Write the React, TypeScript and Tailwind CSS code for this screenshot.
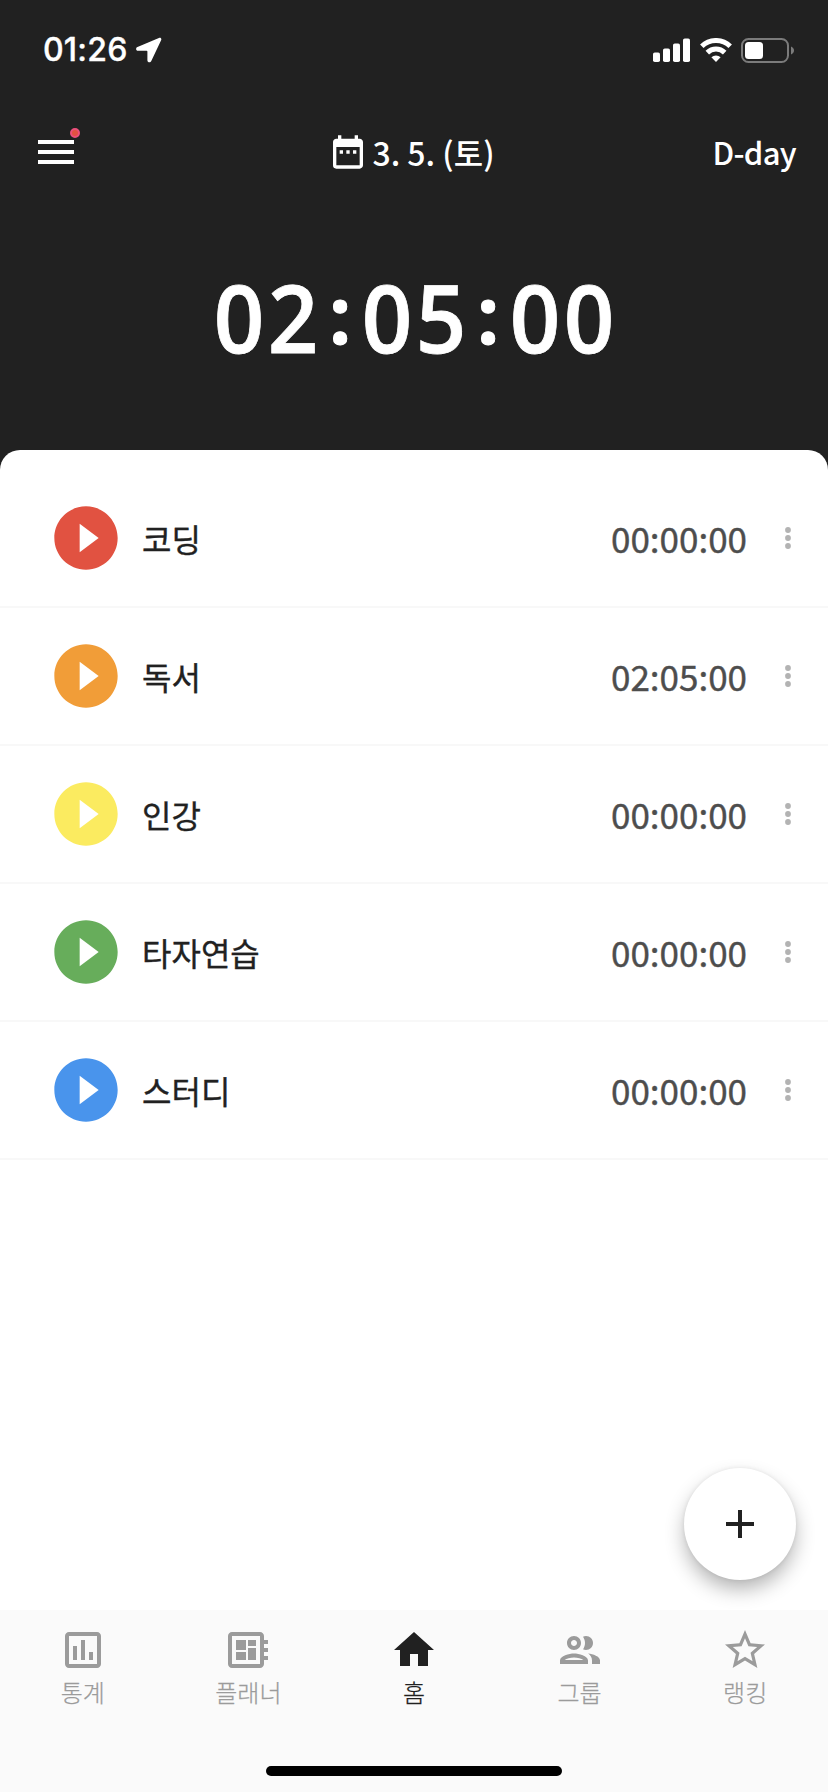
import React from 'react';
import {
  MdAdd,
  MdDateRange,
  MdHome,
  MdMenu,
  MdOutlineAssessment,
  MdOutlineDeveloperBoard,
  MdOutlineGroup,
  MdPlayCircleFilled,
  MdStarOutline,
} from 'react-icons/md';

const subjects = [
  { name: '코딩', time: '00:00:00', color: 'text-[#e15241]' },
  { name: '독서', time: '02:05:00', color: 'text-[#f19d38]' },
  { name: '인강', time: '00:00:00', color: 'text-[#fbeb60]' },
  { name: '타자연습', time: '00:00:00', color: 'text-[#67ad5b]' },
  { name: '스터디', time: '00:00:00', color: 'text-[#4994ec]' },
];

const tabs = [
  { label: '통계', icon: MdOutlineAssessment },
  { label: '플래너', icon: MdOutlineDeveloperBoard },
  { label: '홈', icon: MdHome, active: true },
  { label: '그룹', icon: MdOutlineGroup },
  { label: '랭킹', icon: MdStarOutline },
];

const StatusBar = () => (
  <div className="flex h-[100px] items-center justify-between pl-[43px] pr-[34px]">
    <div className="flex items-center gap-2">
      <span className="w-[85px] whitespace-nowrap font-['Inter',sans-serif] text-[32px] font-medium leading-none tracking-[0.2px] [-webkit-text-stroke:0.35px]">01:26</span>
      <svg width="26" height="26" viewBox="0 0 26 26" fill="currentColor">
        <path d="M22.900.9 1.500 9.900C-.6 10.800-.2 13.800 2 13.800h8.600c.5 0 .8.3.8.8v8.600c0 2.500 3 2.900 3.900.9L25.100 3.200C25.900 1.400 24.600.1 22.900.9Z" />
      </svg>
    </div>
    <div className="flex items-center">
      <svg width="37" height="24" viewBox="0 0 37 24" fill="currentColor">
        <rect x="0" y="14.500" width="7" height="9.500" rx="1.800" />
        <rect x="10" y="10.500" width="7" height="13.500" rx="1.800" />
        <rect x="20" y="5.500" width="7" height="18.500" rx="1.800" />
        <rect x="30" y="0.500" width="7" height="23.500" rx="1.800" />
      </svg>
      <svg className="ml-2.5" width="32" height="24" viewBox="0 0 32 24" fill="none" stroke="currentColor">
        <path d="M1.800 8.200a20.500 20.500 0 0 1 28.400 0" strokeWidth="5" />
        <path d="M7.300 14.600a12.400 12.400 0 0 1 17.400 0" strokeWidth="5" />
        <path d="M16 24l-4.600-4.700a6.500 6.500 0 0 1 9.200 0Z" fill="currentColor" stroke="none" />
      </svg>
      <svg className="ml-[9px]" width="53" height="25" viewBox="0 0 53 25">
        <rect x="1" y="1" width="46" height="23" rx="6.500" fill="none" stroke="#7b7b7b" strokeWidth="2" />
        <rect x="4" y="4" width="18" height="17" rx="3.500" fill="#fff" />
        <path d="M50 8.500c4 1.500 4 6.500 0 8Z" fill="#7b7b7b" />
      </svg>
    </div>
  </div>
);

const Header = () => (
  <div className="grid h-[104px] grid-cols-3 items-center px-8 text-[32px] font-medium leading-[48px]">
    <div className="relative size-12">
      <MdMenu className="size-12" />
      <span className="absolute left-[38px] top-0 size-2.5 rounded-full border-2 border-[#eb4f7a] bg-[#e15241]" />
    </div>
    <div className="flex items-center justify-center gap-1 pr-[5px]">
      <MdDateRange className="size-10" />
      <span className="whitespace-nowrap">3. 5. (토)</span>
    </div>
    <span className="text-right text-[31px] tracking-[-0.7px]">D-day</span>
  </div>
);

const Timer = ({ value }: { value: string }) => (
  <div className="flex h-[246px] items-center justify-center pb-5 font-['Open_Sans',sans-serif] text-[94px] font-semibold leading-none">
    {value.split('').map((char, i) =>
      char === ':' ? (
        <span key={i} className="w-10 pb-1.5 text-center text-[78px] font-bold [-webkit-text-stroke:1px]">:</span>
      ) : (
        <span key={i} className="w-[54px] scale-x-[0.94] text-center [-webkit-text-stroke:0.8px]">{char}</span>
      )
    )}
  </div>
);

const MoreIcon = () => (
  <svg className="ml-[25px] size-8 text-[#b3b3b3]" viewBox="0 0 32 32" fill="currentColor">
    <circle cx="16" cy="8" r="2.900" />
    <circle cx="16" cy="16" r="2.900" />
    <circle cx="16" cy="24" r="2.900" />
  </svg>
);

const App = () => {
  return (
    <div className="flex h-[1792px] w-[828px] flex-col overflow-hidden bg-[#212121] font-['Noto_Sans_CJK_KR',sans-serif] text-white">
      <StatusBar />
      <Header />
      <Timer value="02:05:00" />

      <main className="relative flex-1 rounded-t-[20px] bg-white pt-5">
        {subjects.map((subject) => (
          <div key={subject.name} className="flex h-[138px] items-center border-b-2 border-[#f8f8f8] pl-12 pr-6">
            <MdPlayCircleFilled className={`size-[76px] ${subject.color}`} />
            <span className="ml-[18px] flex-1 text-[32px] leading-[48px] text-[#212121] [-webkit-text-stroke:0.35px]">{subject.name}</span>
            <span className="text-[35px] leading-[48px] text-[#4d4d4d] [-webkit-text-stroke:0.4px]">{subject.time}</span>
            <MoreIcon />
          </div>
        ))}
        <button className="absolute bottom-[30px] right-8 flex size-28 items-center justify-center rounded-full bg-white text-[#212121] shadow-[0_10px_20px_-1px_rgba(0,0,0,0.3),0_0_4px_rgba(0,0,0,0.08)]">
          <MdAdd className="size-12" />
        </button>
      </main>

      <nav className="flex h-[182px] flex-col items-center justify-between bg-[#fafafa] pb-4 pt-4 shadow-[0_-1px_3px_rgba(0,0,0,0.05)]">
        <div className="grid w-full grid-cols-5">
          {tabs.map(({ label, icon: Icon, active }) => (
            <div key={label} className={`flex flex-col items-center ${active ? 'text-[#212121]' : 'text-[#9b9b9b]'}`}>
              <Icon className="size-12" />
              <span className="text-2xl font-light leading-9 [-webkit-text-stroke:0.25px]">{label}</span>
            </div>
          ))}
        </div>
        <div className="h-2.5 w-[296px] rounded-full bg-black" />
      </nav>
    </div>
  );
};

export default App;
